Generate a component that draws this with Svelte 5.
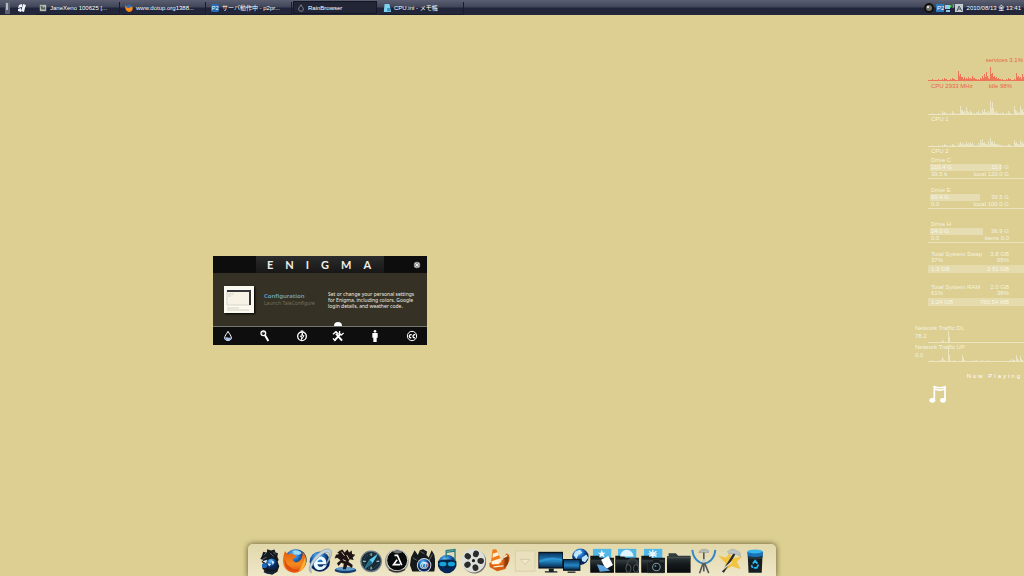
<script lang="ts">
  type Task = { title: string; icon: string; active?: boolean };

  const tasks: Task[] = [
    { title: 'JaneXeno 100625 [...', icon: 'jane' },
    { title: 'www.dotup.org1388...', icon: 'fox' },
    { title: 'サーバ動作中 - p2pr...', icon: 'p2' },
    { title: 'RainBrowser', icon: 'drop', active: true },
    { title: 'CPU.ini - メモ帳', icon: 'note' },
  ];

  const drives = [
    { name: 'Drive C', used: '110.4 G', free: '11.6 G', read: '39.5 k', total: 'local 120.0 G', fill: 74, gap: false },
    { name: 'Drive E', used: '60.4 G', free: '39.5 G', read: '0.0', total: 'local 100.0 G', fill: 52, gap: false },
    { name: 'Drive H', used: '24.0 G', free: '36.9 G', read: '0.0', total: 'items 0.0', fill: 55, gap: true },
  ];

  const memory = [
    { name: 'Total System Swap', size: '3.8 GB', used: '37%', free: '65%', left: '1.3 GB', right: '2.51 GB' },
    { name: 'Total System RAM', size: '2.0 GB', used: '61%', free: '38%', left: '1.24 GB', right: '760.54 MB' },
  ];

  // one sample for every second pixel of the 96px wide graphs
  const total = [0, 0, 1, 0, 0, 1, 0, 1, 2, 1, 0, 1, 2, 1, 0, 9, 6, 3, 3, 2, 3, 2, 4, 2, 1, 1, 2, 4, 6, 8, 2, 13, 7, 4, 3, 2, 1, 1, 0, 1, 2, 1, 0, 1, 7, 4, 3, 6];
  const cpu1 = [0, 0, 1, 0, 0, 1, 0, 3, 2, 1, 0, 1, 3, 1, 0, 1, 8, 4, 3, 7, 2, 4, 1, 1, 2, 3, 1, 4, 5, 2, 3, 13, 12, 2, 3, 1, 1, 2, 0, 1, 3, 1, 0, 8, 3, 2, 8, 5];
  const cpu2 = [0, 0, 1, 0, 0, 1, 0, 1, 2, 1, 0, 1, 2, 1, 0, 3, 4, 3, 2, 4, 3, 4, 3, 1, 1, 3, 6, 7, 4, 2, 5, 8, 5, 4, 2, 2, 1, 1, 0, 1, 2, 1, 0, 6, 4, 2, 6, 4];
  const down = [0, 0, 0, 0, 0, 0, 0, 2, 0, 0, 11, 0, 0, 0, 0, 0, 0, 0, 0, 0, 0, 0, 0, 0, 0, 0, 0, 0, 0, 0, 0, 0, 0, 0, 0, 0, 0, 0, 0, 0, 0, 0, 0, 0, 0, 0, 0, 0];
  const up = [0, 0, 1, 0, 0, 0, 1, 4, 1, 0, 13, 0, 0, 1, 0, 0, 0, 6, 1, 0, 0, 0, 0, 1, 1, 0, 0, 1, 0, 0, 1, 0, 0, 0, 0, 0, 0, 0, 0, 0, 0, 1, 2, 1, 6, 1, 5, 1];

  const dock = ['Jane', 'Firefox', 'Internet Explorer', 'Knight', 'Compass', 'Lambda', 'Mail', 'Music', 'Movies', 'VLC', 'Placeholder', 'Computer', 'Network', 'Pictures folder', 'Music folder', 'Photos folder', 'Folder', 'Satellite', 'Tools', 'Recycle bin'];

  const tabs = ['Colors', 'Search', 'Time', 'Configuration', 'About', 'License'];

  function spikes(values: number[]) {
    return 'M0 13h96v1H0z' + values.map((v, i) => `M${i * 2} 13v-${v}h1v${v}zM${i * 2 + 1} 13v-${v >> 1}h1v${v >> 1}z`).join('');
  }
</script>

{#snippet graph(values: number[])}
  <svg class="graph" viewBox="0 0 96 14" preserveAspectRatio="none" aria-hidden="true">
    <path d={spikes(values)} />
  </svg>
{/snippet}

<div class="desktop">
  <header class="taskbar">
    <button class="launch" aria-label="Show desktop">
      <svg viewBox="0 0 8 12"><path d="M1 0h5v12H1z" fill="#5c6070" /><path d="M2 1h2v7H2z" fill="#b5b9c4" /></svg>
    </button>
    <button class="launch" aria-label="Start">
      <svg viewBox="0 0 10 12"><path d="M2 3l3-1v3L1 6zM6 2l3 1-1 3H5zM1 7l3-1v4L1 9zM5 6h3l-1 4-3-1z" fill="#f2f5ff" /></svg>
    </button>
    <nav class="tasks">
      {#each tasks as task}
        <button class="task" class:active={task.active}>
          <svg viewBox="0 0 10 10" aria-hidden="true">
            {#if task.icon === 'jane'}
              <path d="M1 1h8v8H1z" fill="#b9bcb4" /><path d="M2 3l2-1 1 3 2-2 1 4H3z" fill="#52645c" />
            {:else if task.icon === 'fox'}
              <circle cx="5" cy="5" r="4" fill="#306cb4" /><path d="M1 1c0 4 3 5 6 3l2-1c2 4-1 7-4 7S-1 6 1 1z" fill="#ff8a16" />
            {:else if task.icon === 'p2'}
              <rect width="10" height="10" rx="2" fill="#276bb5" /><text x="1" y="8" font-size="7" fill="#fff">P2</text>
            {:else if task.icon === 'drop'}
              <path d="M5 1C3 4 2 5 2 7s6 3 6 0S6 4 5 1z" fill="none" stroke="#9a9ca8" />
            {:else}
              <path d="M2 0h6l2 10H1z" fill="#7ed3f0" /><path d="M5 5h4v4H5z" fill="#369ccd" />
            {/if}
          </svg>
          <span>{task.title}</span>
        </button>
      {/each}
    </nav>
    <div class="tray">
      <svg viewBox="0 0 40 12" aria-hidden="true">
        <circle cx="6" cy="6" r="5" fill="#11120f" /><circle cx="6" cy="6" r="3" fill="#777568" /><circle cx="5" cy="5" r="1" fill="#fff" />
        <path d="M13 2h8v8h-8z" fill="#2b78bd" /><text x="14" y="8" font-size="6" fill="#fff">P2</text>
        <path d="M22 3h5v4h-5zM23 8h4v2h-4z" fill="#8bcdf1" /><path d="M27 3l2 1-2 2z" fill="#4ee13c" /><path d="M30 2q1 2 0 4" fill="none" stroke="#4ee13c" />
        <path d="M32 2h8v8h-8z" fill="#c5ccd0" /><path d="M34 9l2-5 3 5M35 7h3" fill="none" stroke="#465968" />
      </svg>
      <time datetime="2010-08-13T13:41">2010/08/13 金 13:41</time>
    </div>
  </header>

  <main class="space">
    <section class="enigma" aria-label="Enigma">
      <header>
        <h1>ENIGMA</h1>
        <button class="close" aria-label="Close">
          <svg viewBox="0 0 10 10"><circle cx="5" cy="5" r="4" fill="#9b9b9b" /><path d="M3 3l4 4M7 3L3 7" stroke="#fff" /></svg>
        </button>
      </header>
      <div class="details">
        <svg class="thumb" viewBox="0 0 30 27" aria-hidden="true">
          <path d="M0 0h30v27H0z" fill="#fbfaf1" /><path d="M3 5h23v14H3z" fill="#f6f3e6" stroke="#d8d5c8" />
          <path d="M3 5h23v14" fill="none" stroke="#34363a" stroke-width="2" />
          <path d="M4 8h6M4 10h3M3 22h12M3 24h22" stroke="#d5d2c4" />
        </svg>
        <div class="name">
          <h2>Configuration</h2>
          <a href="#configure">Launch TaleConfigure</a>
        </div>
        <p>Set or change your personal settings<br />for Enigma, including colors, Google<br />login details, and weather code.</p>
      </div>
      <nav>
        {#each tabs as tab, i}
          <button class:current={i === 3} aria-label={tab}>
            <svg viewBox="0 0 36 36" fill="none" stroke="#fff" stroke-width="3">
              {#if i === 0}
                <path d="M18 4C14 12 8 17 8 24c0 10 20 10 20 0 0-7-6-12-10-20z" /><path d="M10 23c5-5 10 4 16-1 2 12-15 14-16 1z" fill="#a9c0ea" stroke="none" />
              {:else if i === 1}
                <circle cx="13" cy="10" r="7" stroke-width="4" /><path d="M18 16l10 17" stroke-width="6" /><path d="M11 10c0-3 3-4 5-3" stroke-width="2" />
              {:else if i === 2}
                <circle cx="18" cy="19" r="13" stroke-width="4" /><path d="M14 3h8M18 3v8M20 10l-7 10h5l-2 9 8-12h-5z" />
              {:else if i === 3}
                <path d="M8 31l18-20M12 11l18 21" stroke-width="6" /><path d="M3 13l9-8 7 6M23 3l-1 9 6 3 7-6M3 25l7 8" stroke-width="4" />
              {:else if i === 4}
                <circle cx="18" cy="4" r="4" fill="#fff" stroke="none" /><path d="M10 9h16v14h-3v13H13V23h-3z" fill="#fff" stroke="none" />
              {:else}
                <circle cx="18" cy="18" r="14" /><path d="M17 15c-7-5-11 10-1 8M28 15c-7-5-11 10-1 8" stroke-width="4" />
              {/if}
            </svg>
          </button>
        {/each}
      </nav>
    </section>

    <aside class="monitor">
      <div class="cpu hot">
        <p class="process">services 3.1%</p>
        {@render graph(total)}
        <p class="pair"><span>CPU 2933 MHz</span><span>Idle 98%</span></p>
      </div>
      <div class="cpu">
        {@render graph(cpu1)}
        <p>CPU 1</p>
      </div>
      <div class="cpu">
        {@render graph(cpu2)}
        <p>CPU 2</p>
      </div>

      <div class="drives">
        {#each drives as drive}
          <div class="drive" class:gap={drive.gap}>
            <p>{drive.name}</p>
            <div class="bar">
              <div class="fill" style="width: {drive.fill}%"></div>
              <p class="pair"><span>{drive.used}</span><span>{drive.free}</span></p>
            </div>
            <p class="pair rate"><span>{drive.read}</span><span>{drive.total}</span></p>
          </div>
        {/each}
      </div>

      {#each memory as item}
        <div class="memory">
          <p class="pair"><span>{item.name}</span><span>{item.size}</span></p>
          <p class="pair"><span>{item.used}</span><span>{item.free}</span></p>
          <p class="pair band"><span>{item.left}</span><span>{item.right}</span></p>
        </div>
      {/each}

      <div class="network">
        <div class="traffic">
          <div class="labels"><p>Network Traffic DL</p><p>78.2</p></div>
          {@render graph(down)}
        </div>
        <div class="traffic">
          <div class="labels"><p>Network Traffic UP</p><p>0.0</p></div>
          {@render graph(up)}
        </div>
      </div>

      <div class="playing">
        <h2>Now Playing</h2>
        <svg viewBox="0 0 54 60" aria-hidden="true">
          <path d="M16 46V8c10 4 22 4 32 0v38M16 15c10 4 22 4 32 0" fill="none" stroke="#fff" stroke-width="5" />
          <ellipse cx="10" cy="49" rx="9" ry="7" fill="#fff" /><ellipse cx="42" cy="49" rx="9" ry="7" fill="#fff" />
        </svg>
      </div>
    </aside>
  </main>

  <footer class="dock">
    {#each dock as app, i}
      <button aria-label={app}>
        <svg viewBox="0 0 78 84" aria-hidden="true">
          {#if i === 0}
            <path d="M18 27l4-13 11 3 1-11 12 4 10-3 4 9 7 2-2 11 4 9-3 6 5 14-6 17-16 9-17-5-13-15 5-14-7-6 5-5-9-3z" fill="#14191f" />
            <path d="M24 24l10-9M43 18l11 10M18 38l14-8M60 22l-7-8" stroke="#59626c" stroke-width="3" />
            <circle cx="48" cy="51" r="17" fill="url(#globe)" /><path d="M20 43l14-5-3 11zM35 49l5 10 6-8zM47 40l9 5-5 9z" fill="#d9efff" /><circle cx="26" cy="56" r="8" fill="#1c66b8" /><path d="M24 74q20 10 36-1" stroke="#17263b" stroke-width="5" fill="none" />
          {:else if i === 1}
            <circle cx="42" cy="39" r="33" fill="url(#globe)" /><path d="M32 12c9-5 22-2 28 6l-10 6-12-3z" fill="#9bdcf5" />
            <path d="M9 12l9 10c9-5 15-2 18 1l9 5-13 8c3 13 19 13 27-2 6-11 3-20 3-20 16 14 16 40 1 53C47 83 20 81 8 62-1 48 3 27 9 12z" fill="url(#orange)" /><path d="M8 34q-5 26 17 37 23 9 36-9-18 11-33 1-17-11-20-29z" fill="#dc4d10" /><path d="M70 32c5 22-6 38-21 42 11-12 15-25 21-42z" fill="#fbb433" />
          {:else if i === 2}
            <circle cx="39" cy="44" r="31" fill="url(#globe)" /><path d="M20 50c0-27 42-31 39 2H32c2 10 14 10 19 2h9c-8 22-39 20-40-4zm12-5h16c-1-11-15-10-16 0z" fill="#e8faff" />
            <path d="M14 78C-14 65 46-9 71 8c10 9-2 34-17 49 12-19 18-34 12-40C53 5 0 61 14 78z" fill="#c3d2dd" stroke="#8098ad" stroke-width="2" />
          {:else if i === 3}
            <ellipse cx="38" cy="70" rx="33" ry="9" fill="#153c67" /><ellipse cx="38" cy="66" rx="29" ry="6" fill="#5b9aca" />
            <path d="M20 11l9-4 6 9 9-9 5 9 8-6 1 11 10 2-8 8 3 8-12-2-4 7 13 10-2 9-14-9-5 13h-9l3-17-8-3-8 10-5-8 11-9-10-8-8 2 4-11 10-2-6-4z" fill="#1e1413" /><path d="M26 14l9 12M42 24l7 13M30 38l9 4" stroke="#d9c3a4" stroke-width="3" />
          {:else if i === 4}
            <circle cx="40" cy="43" r="33" fill="#667985" /><circle cx="40" cy="43" r="29" fill="#182b35" /><circle cx="40" cy="43" r="22" fill="none" stroke="#608497" stroke-width="3" stroke-dasharray="2 5" />
            <path d="M61 20L45 48 19 66l16-28z" fill="#5ccdf0" /><path d="M35 38l10 10-26 18z" fill="#266b83" /><path d="M40 18v9M40 59v9M15 43h9M56 43h9" stroke="#b3d6df" stroke-width="3" />
          {:else if i === 5}
            <circle cx="39" cy="43" r="36" fill="#8f918a" /><circle cx="40" cy="40" r="32" fill="#090b0b" stroke="#ddd" stroke-width="3" /><path d="M25 14q17-10 33 0-16 11-33 0z" fill="#6d716e" />
            <path d="M32 25h9l13 30M40 38l-11 15h20" fill="none" stroke="#fff" stroke-width="5" /><path d="M15 68q22 13 49 0" fill="none" stroke="#302d28" stroke-width="4" />
          {:else if i === 6}
            <path d="M3 31L14 9l10 15 6-15 10-3 12 7-2 11 7 7L66 9l8 14 4 25-4 26H7L0 55z" fill="#15191b" /><path d="M8 32l13 8M68 22L58 40M32 13l12 7" stroke="#616769" stroke-width="3" />
            <circle cx="43" cy="55" r="22" fill="#d5dfe2" /><circle cx="43" cy="55" r="19" fill="url(#globe)" /><text x="29" y="64" font-size="29" font-weight="bold" fill="#fff">@</text>
          {:else if i === 7}
            <circle cx="37" cy="51" r="28" fill="url(#globe)" /><path d="M9 42q28-9 56 0v17q-28 9-56 0z" fill="#052444" /><ellipse cx="24" cy="51" rx="11" ry="7" fill="#14a3dc" /><ellipse cx="50" cy="51" rx="11" ry="7" fill="#14a3dc" /><path d="M34 34V10l27-3v34M34 16l27-4" fill="none" stroke="#247d84" stroke-width="4" />
          {:else if i === 8}
            <circle cx="41" cy="44" r="36" fill="#6c6c68" /><circle cx="38" cy="41" r="36" fill="#dedfda" />
            {#each [0, 72, 144, 216, 288] as turn}<ellipse cx="38" cy="19" rx="9" ry="10" fill="#292b2a" transform="rotate({turn + 20} 38 41)" />{/each}
            <circle cx="38" cy="41" r="5" fill="#222" />
          {:else if i === 9}
            <path d="M10 48l14-6 26-3 12-20q13 2 9 22L59 66 34 73 11 60z" fill="#d65e12" /><path d="M20 7l11-1 20 41-12 9-18-1-6-8z" fill="#f27a17" /><path d="M21 19l14-4 5 9-20 8zM17 43l27-9 4 8-10 9-21 1z" fill="#fff2dc" /><path d="M54 28l16 1-3 22-12 13 2-22z" fill="#8b3c13" /><path d="M23 60l30-3M55 31l9-6" stroke="#fff0d0" stroke-width="4" />
          {:else if i === 10}
            <path d="M10 11h60v62H10z" fill="#e9e0bd" stroke="#d2c69d" stroke-width="2" /><path d="M26 37h28L40 53z" fill="#f1e9ca" stroke="#c9bd94" stroke-width="2" />
          {:else if i === 11}
            <path d="M1 14h76v51H1z" fill="#09131b" /><path d="M4 18h70v43H4z" fill="url(#screen)" /><path d="M4 41q35-17 70-4v4q-34-8-70 5z" fill="#2f96d2" /><path d="M33 65h15v8H33zM21 73h38v4H21z" fill="#172028" />
          {:else if i === 12}
            <circle cx="53" cy="29" r="25" fill="url(#globe)" /><path d="M37 13l15-5 7 9-12 7-6 12-9-12zM57 32l14-10 6 10-10 14-9-4z" fill="#bfe6ff" />
            <path d="M0 36h53v36H0z" fill="#09131b" /><path d="M3 39h47v29H3z" fill="url(#screen)" /><path d="M14 74h24v4H14z" fill="#172028" />
          {:else if i >= 13 && i <= 15}
            <path d="M12 5h56v35H12z" fill="#50b7e6" /><path d="M4 26h26l5 6h41v46H4z" fill="#101719" /><path d="M5 38h70v38H5z" fill="url(#black)" />
            {#if i === 13}
              <path d="M39 8l3 9h9l-7 5 3 9-8-5-8 5 3-9-7-5h9z" fill="#fff" /><path d="M37 38l22-11 14 27-22 13z" fill="#fff" /><path d="M24 52l19 4 22 16-32 3z" fill="#5da0dc" />
            {:else if i === 14}
              <path d="M19 28a20 20 0 0 1 40 0z" fill="#e0f4fb" /><path d="M39 60c0-32 32-34 34-2" fill="none" stroke="#3b4144" stroke-width="6" /><ellipse cx="44" cy="65" rx="8" ry="12" fill="#11191c" stroke="#777" stroke-width="2" /><ellipse cx="67" cy="65" rx="8" ry="12" fill="#11191c" stroke="#777" stroke-width="2" />
            {:else}
              <path d="M39 8v24M28 12l22 16M50 12L28 28M26 20h26" stroke="#e9faff" stroke-width="4" /><path d="M23 45h14l5-8h16l4 8h12v33H23z" fill="#161c1e" stroke="#465054" /><circle cx="50" cy="60" r="13" fill="#8b969a" /><circle cx="50" cy="60" r="10" fill="#0d171e" /><circle cx="47" cy="57" r="3" fill="#4b879e" />
            {/if}
          {:else if i === 16}
            <path d="M8 18h22l7 8h37v12H8z" fill="#313d3e" /><path d="M3 27h72v51H3z" fill="url(#black)" /><path d="M4 32h70" stroke="#576163" stroke-width="2" />
          {:else if i === 17}
            <path d="M4 8c6 54 65 54 70 0" fill="none" stroke="#3187c4" stroke-width="6" /><path d="M39 12v38M39 42L26 79M39 42l15 37M39 48v26" stroke="#555b5d" stroke-width="5" /><circle cx="39" cy="42" r="6" fill="#c6cbce" /><path d="M24 14q5-9 20-8l10 5v5H24z" fill="#b8bcbb" stroke="#696f6f" />
          {:else if i === 18}
            <path d="M3 25l25 7 9-13 12 14 27-3-16 14 12 22-28-8-20 13 2-23z" fill="#f1c340" /><path d="M18 76l35-56" stroke="#292b2b" stroke-width="7" /><path d="M32 13l15-8 22 10 3 14-17-10-18 2z" fill="#bdc3c5" stroke="#82898b" /><path d="M8 76l37-31" stroke="#e5e2d0" stroke-width="4" />
          {:else}
            <path d="M17 14h46l-3 64H20z" fill="#171e22" /><path d="M17 13h46v17H18z" fill="#1673b7" /><ellipse cx="40" cy="13" rx="23" ry="6" fill="#39b5ee" /><path d="M19 26q21 9 43 0l-1 10H20z" fill="#22343d" /><path d="M33 50l7-9 7 9M50 53l-5 10H36M32 63l-3-9" fill="none" stroke="#20b9f5" stroke-width="5" />
          {/if}
        </svg>
      </button>
    {/each}
  </footer>
</div>

<svg class="defs" aria-hidden="true">
  <defs>
    <radialGradient id="globe" cx="0.4" cy="0.25"><stop offset="0" stop-color="#7dccf5" /><stop offset="0.5" stop-color="#2174cb" /><stop offset="1" stop-color="#082759" /></radialGradient>
    <linearGradient id="orange" x2="0" y2="1"><stop offset="0" stop-color="#e05a13" /><stop offset="0.6" stop-color="#f58a1e" /><stop offset="1" stop-color="#e8520c" /></linearGradient>
    <linearGradient id="screen" x2="0" y2="1"><stop offset="0" stop-color="#0b3761" /><stop offset="0.55" stop-color="#2387c4" /><stop offset="1" stop-color="#092e54" /></linearGradient>
    <linearGradient id="black" x2="0" y2="1"><stop offset="0" stop-color="#343e40" /><stop offset="0.5" stop-color="#14191b" /><stop offset="1" stop-color="#080b0d" /></linearGradient>
  </defs>
</svg>

<style>
  :global(body) {
    margin: 0;
    background: #dccf91;
  }

  .desktop {
    display: flex;
    flex-direction: column;
    min-height: 100vh;
    overflow: hidden;
    font-family: 'Liberation Sans', 'Noto Sans CJK JP', sans-serif;
    font-size: 6px;
    line-height: 8px;
    background: #dccf91;
  }

  h1, h2, p {
    margin: 0;
    font-size: inherit;
    font-weight: normal;
  }

  button {
    padding: 0;
    border: 0;
    background: none;
    color: inherit;
    font: inherit;
  }

  svg {
    display: block;
  }

  .defs {
    position: absolute;
    width: 0;
    height: 0;
  }

  /* Taskbar */
  .taskbar {
    display: flex;
    align-items: center;
    height: 15px;
    padding: 0 3px;
    box-sizing: border-box;
    color: #fff;
    background: linear-gradient(#5a5e70, #42465a 45%, #202439 55%, #25283a);
  }

  .launch svg {
    width: 10px;
    height: 12px;
    margin-right: 2px;
  }

  .launch + .launch svg {
    width: 14px;
  }

  .tasks {
    display: flex;
    flex: 1;
    gap: 2px;
    margin-left: 4px;
  }

  .task {
    display: flex;
    align-items: center;
    gap: 3px;
    width: 84px;
    height: 13px;
    padding: 0 4px;
    box-sizing: border-box;
    white-space: nowrap;
    box-shadow: 1px 1px #191c2a;
  }

  .task svg {
    width: 8px;
    height: 8px;
  }

  .task.active {
    background: #222536;
    box-shadow: inset 0 0 0 1px #151725;
  }

  .tray {
    display: flex;
    align-items: center;
    gap: 4px;
    white-space: nowrap;
  }

  .tray svg {
    width: 40px;
    height: 12px;
  }

  /* Desktop space */
  .space {
    position: relative;
    display: flex;
    flex: 1;
    justify-content: flex-end;
  }

  .enigma {
    position: absolute;
    top: 241px;
    left: 213px;
    width: 214px;
    background: #353124;
    color: #f0eee6;
  }

  .enigma header {
    display: grid;
    grid-template-columns: 43px 128px 1fr;
    height: 17px;
    background: #0d0d0d;
  }

  .enigma h1 {
    grid-column: 2;
    padding-left: 11px;
    font-family: Lato, sans-serif;
    font-size: 11px;
    font-weight: bold;
    line-height: 17px;
    letter-spacing: 12px;
    white-space: nowrap;
    overflow: hidden;
    background: linear-gradient(#2c2c2c, #171717);
  }

  .close {
    justify-self: end;
    margin-right: 6px;
  }

  .close svg {
    width: 8px;
    height: 8px;
  }

  .details {
    display: flex;
    align-items: center;
    height: 53px;
    padding: 0 8px 0 11px;
    font-family: 'Noto Sans', sans-serif;
    font-size: 5px;
    line-height: 6px;
    white-space: nowrap;
  }

  .thumb {
    width: 30px;
    height: 27px;
    box-shadow: 1px 1px 2px #000;
  }

  .name {
    width: 64px;
    margin-left: 10px;
    padding-bottom: 2px;
  }

  .name h2 {
    font-size: 6px;
    line-height: 8px;
    font-weight: 600;
    color: #6aa3cc;
  }

  .name a {
    color: #77725f;
    text-decoration: none;
  }

  .enigma nav {
    display: flex;
    justify-content: space-between;
    align-items: center;
    height: 18px;
    padding: 0 9px;
    border-top: 1px solid #77766e;
    background: #0e0e0e;
  }

  .enigma nav button {
    position: relative;
  }

  .enigma nav svg {
    width: 12px;
    height: 12px;
  }

  .current::before {
    content: '';
    position: absolute;
    top: -8px;
    left: 2px;
    width: 8px;
    height: 4px;
    border-radius: 4px 4px 0 0;
    background: #fff;
  }

  /* System monitor */
  .monitor {
    width: 96px;
    padding-top: 41px;
    color: rgba(255, 255, 255, 0.75);
    white-space: nowrap;
  }

  .monitor p {
    padding-left: 3px;
  }

  .monitor .pair {
    display: flex;
    justify-content: space-between;
    padding-right: 15px;
  }

  .graph {
    width: 100%;
    height: 14px;
    fill: rgba(255, 255, 255, 0.45);
  }

  .cpu {
    height: 32px;
  }

  .hot {
    height: 45px;
    color: #ec6446;
  }

  .hot .process {
    padding: 0 1px 3px 0;
    text-align: right;
  }

  .hot .graph {
    fill: #ec7657;
  }

  .hot .pair {
    padding-top: 1px;
    padding-right: 12px;
  }

  .monitor .drives {
    margin-top: -8px;
  }

  .drive {
    height: 21px;
    margin-bottom: 8px;
    border-bottom: 1px solid rgba(255, 255, 255, 0.4);
    line-height: 7px;
  }

  .drive.gap {
    margin-top: 12px;
  }

  .bar {
    display: grid;
  }

  .bar > * {
    grid-area: 1 / 1;
  }

  .fill {
    margin-left: 2px;
    background: rgba(255, 255, 255, 0.3);
  }

  .memory {
    height: 33px;
    line-height: 6px;
  }

  .memory .band {
    margin-top: 2px;
    line-height: 8px;
    background: rgba(255, 255, 255, 0.25);
  }

  .network {
    margin: 7px 0 0 -13px;
  }

  .traffic {
    display: grid;
    height: 19px;
  }

  .traffic > :global(*) {
    grid-area: 1 / 1;
  }

  .traffic .labels p {
    padding: 0;
  }

  .traffic .graph {
    align-self: end;
    justify-self: end;
    width: 96px;
  }

  .playing {
    height: 40px;
    margin: 10px 2px 0 -2px;
    background: rgba(225, 205, 150, 0.3);
  }

  .playing h2 {
    text-align: right;
    letter-spacing: 2px;
    color: #fff;
  }

  .playing svg {
    width: 18px;
    height: 20px;
    margin: 4px 0 0 3px;
  }

  /* Dock */
  .dock {
    display: grid;
    grid-template-columns: repeat(20, 1fr);
    align-self: center;
    width: 528px;
    max-width: 100%;
    height: 32px;
    padding: 1px 8px 0;
    box-sizing: border-box;
    border-radius: 5px 5px 0 0;
    background: linear-gradient(#e2d8ab, #eee6c7);
    box-shadow: 0 0 5px 1px #7d7349;
  }

  .dock svg {
    width: 100%;
    height: 28px;
  }
</style>
